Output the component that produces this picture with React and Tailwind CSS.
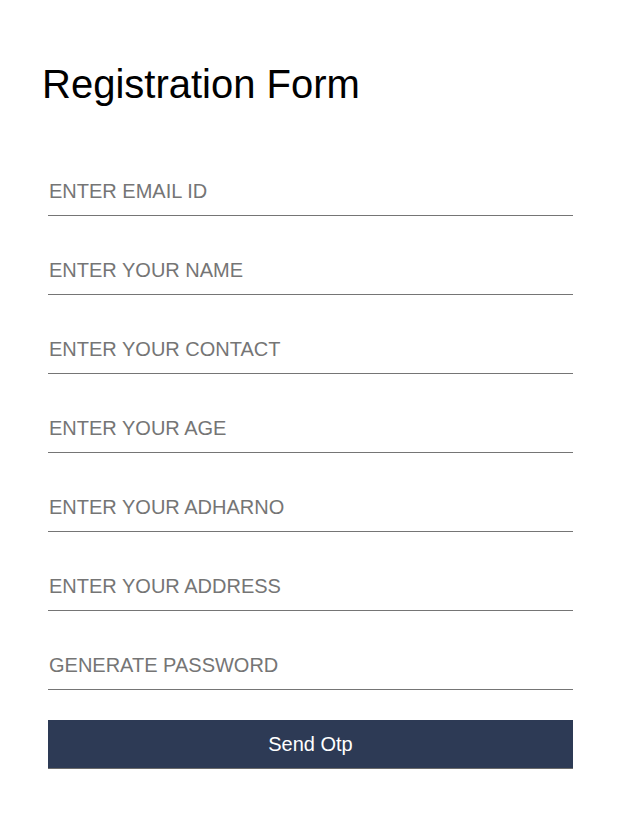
import React, { useState } from "react";

const fields = [
  { name: "email", placeholder: "ENTER EMAIL ID", type: "email" },
  { name: "name", placeholder: "ENTER YOUR NAME", type: "text" },
  { name: "contact", placeholder: "ENTER YOUR CONTACT", type: "text" },
  { name: "age", placeholder: "ENTER YOUR AGE", type: "text" },
  { name: "adharno", placeholder: "ENTER YOUR ADHARNO", type: "text" },
  { name: "address", placeholder: "ENTER YOUR ADDRESS", type: "text" },
  { name: "password", placeholder: "GENERATE PASSWORD", type: "password" },
];

const App = () => {
  const [form, setForm] = useState({});

  const handleChange = (e) =>
    setForm({ ...form, [e.target.name]: e.target.value });

  return (
    <div className="min-h-[827px] bg-white font-['Liberation_Sans',Arial,sans-serif]">
      <div className="pt-[60px] pl-[42px]">
        <h1 className="text-[40px] leading-[48px] text-black font-normal">
          Registration Form
        </h1>
      </div>
      <form
        className="ml-[48px] w-[525px] pt-[60px] flex flex-col"
        onSubmit={(e) => e.preventDefault()}
      >
        {fields.map((f) => (
          <input
            key={f.name}
            name={f.name}
            type={f.type}
            placeholder={f.placeholder}
            value={form[f.name] || ""}
            onChange={handleChange}
            className="h-[48px] mb-[31px] px-[1px] text-[20px] text-black placeholder:text-[#757575] border-b border-[#757575] outline-none bg-transparent"
          />
        ))}
        <button
          type="submit"
          className="-mt-[1px] h-[49px] bg-[#2d3a55] text-white text-[20px] border-b border-[#6b6b6b]"
        >
          Send Otp
        </button>
      </form>
    </div>
  );
};

export default App;
